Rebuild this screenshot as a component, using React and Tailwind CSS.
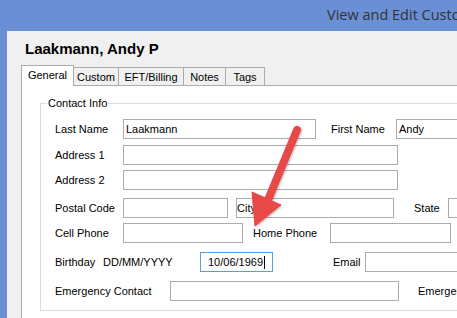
import React from 'react';

const inputBase = 'h-[20px] shrink-0 border border-[#acacac] bg-white pl-[2px] text-[11px] leading-[18px] text-black';

const Label = ({ className = '', children }) => (
  <span className={`shrink-0 whitespace-nowrap text-[11px] leading-[20px] text-black ${className}`}>{children}</span>
);

const Field = ({ w, value = '' }) => (
  <div className={`${inputBase} ${w}`}>{value}</div>
);

const tabs = [
  { name: 'Custom', w: 'w-[46px]' },
  { name: 'EFT/Billing', w: 'w-[66px]' },
  { name: 'Notes', w: 'w-[43px]' },
  { name: 'Tags', w: 'w-[40px]' },
];

const App = () => {
  return (
    <div className="relative flex h-[318px] w-[457px] flex-col overflow-hidden bg-[#6a8fd5] font-['Liberation_Sans',Arial,sans-serif]">
      {/* Title bar */}
      <div className="h-[31px] shrink-0 whitespace-nowrap pl-[327px] pt-[4px] font-['Open_Sans',sans-serif] text-[14.5px] leading-[22px] text-[#333]">
        View and Edit Customer
      </div>

      {/* Client area */}
      <div className="ml-[7px] flex w-[600px] flex-1 flex-col bg-[#f0f0f0]">
        <div className="pl-[18px] pt-[9px] text-[15px] font-bold leading-[18px] text-black">
          Laakmann, Andy P
        </div>

        {/* Tabs */}
        <div className="ml-[14px] mt-[7px] flex items-end">
          <div className="relative z-10 -mb-px flex h-[21px] w-[53px] shrink-0 items-start justify-center border border-b-0 border-[#acacac] bg-white pt-[2px] text-[11px] leading-[14px] text-black">
            General
          </div>
          {tabs.map((t) => (
            <div
              key={t.name}
              className={`-ml-px flex h-[18px] shrink-0 items-center justify-center border border-b-0 border-[#acacac] bg-[#f0f0f0] text-[11px] leading-[14px] text-black ${t.w}`}
            >
              {t.name}
            </div>
          ))}
        </div>

        {/* Panel */}
        <div className="ml-[14px] flex-1 border-l border-t border-[#acacac] bg-white">
          <div className="relative ml-[18px] mt-[17px] w-[600px] border border-[#dcdcdc] pb-[9px] pl-[14px] pt-[15px]">
            <span className="absolute -top-[8px] left-[6px] bg-white px-[1px] text-[11px] leading-[14px] text-black">
              Contact Info
            </span>

            <div className="flex h-[20px] items-center">
              <Label className="w-[68px]">Last Name</Label>
              <Field w="w-[193px]" value="Laakmann" />
              <Label className="ml-[15px] w-[65px]">First Name</Label>
              <Field w="w-[120px]" value="Andy" />
            </div>

            <div className="mt-[6px] flex h-[20px] items-center">
              <Label className="w-[68px]">Address 1</Label>
              <Field w="w-[275px]" />
            </div>

            <div className="mt-[5px] flex h-[20px] items-center">
              <Label className="w-[68px]">Address 2</Label>
              <Field w="w-[275px]" />
            </div>

            <div className="mt-[8px] flex h-[20px] items-center">
              <Label className="w-[68px]">Postal Code</Label>
              <Field w="w-[105px]" />
              <div className={`${inputBase} relative ml-[8px] w-[158px]`}>
                <span className="absolute left-0 top-0 text-[11px] leading-[18px]">City</span>
              </div>
              <Label className="ml-[20px] w-[34px]">State</Label>
              <Field w="w-[80px]" />
            </div>

            <div className="mt-[5px] flex h-[20px] items-center">
              <Label className="w-[68px]">Cell Phone</Label>
              <Field w="w-[120px]" />
              <Label className="ml-[10px] w-[77px]">Home Phone</Label>
              <Field w="w-[121px]" />
            </div>

            <div className="mt-[9px] flex h-[20px] items-center">
              <Label className="w-[48px]">Birthday</Label>
              <Label className="w-[97px]">DD/MM/YYYY</Label>
              <div className="flex h-[20px] w-[73px] shrink-0 items-center border border-[#569de5] bg-white pl-[7px] text-[11px] leading-[14px] text-black">
                10/06/1969
                <span className="ml-px inline-block h-[13px] w-px bg-black" />
              </div>
              <Label className="ml-[60px] w-[32px]">Email</Label>
              <Field w="w-[150px]" />
            </div>

            <div className="mt-[9px] flex h-[20px] items-center">
              <Label className="w-[115px]">Emergency Contact</Label>
              <Field w="w-[229px]" />
              <Label className="ml-[19px]">Emergency Contact</Label>
            </div>
          </div>
        </div>
      </div>

      {/* Annotation arrow */}
      <svg className="pointer-events-none absolute left-0 top-0" width="457" height="318" viewBox="0 0 457 318">
        <defs>
          <filter id="sh" x="-20%" y="-20%" width="140%" height="140%">
            <feDropShadow dx="1" dy="1" stdDeviation="1" floodColor="#000" floodOpacity="0.25" />
          </filter>
        </defs>
        <g filter="url(#sh)" fill="#e64a47" stroke="#e64a47">
          <line x1="297" y1="130" x2="268" y2="200" strokeWidth="8" strokeLinecap="round" />
          <polygon points="255,226 252,192 281,205" strokeWidth="1" strokeLinejoin="round" />
        </g>
      </svg>
    </div>
  );
};

export default App;
